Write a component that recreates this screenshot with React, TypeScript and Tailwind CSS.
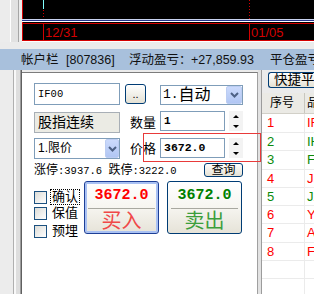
import React from 'react'

const mono = "font-['Liberation_Mono','Noto_Sans_CJK_SC',monospace]"

function Chart() {
  return (
    <div className="relative h-[41px] w-[292px] bg-black">
      <svg className="absolute left-0 top-0" width="292" height="41">
        <line x1="0.5" y1="0" x2="0.5" y2="41" stroke="#d40000" />
        <line x1="0" y1="19.5" x2="292" y2="19.5" stroke="#c8d2f0" />
        <line x1="0" y1="20.5" x2="292" y2="20.5" stroke="#24348c" />
        <line x1="0" y1="21.5" x2="292" y2="21.5" stroke="#ffffff" />
        <line x1="0" y1="23.5" x2="292" y2="23.5" stroke="#d40000" />
        <line x1="0" y1="40.5" x2="292" y2="40.5" stroke="#d40000" />
        <line x1="21.5" y1="0" x2="21.5" y2="9" stroke="#80ffff" />
        <line x1="21.5" y1="10" x2="21.5" y2="19" stroke="#d40000" strokeDasharray="1 2" />
        <line x1="21.5" y1="24" x2="21.5" y2="40" stroke="#d40000" />
        <line x1="227.5" y1="0" x2="227.5" y2="19" stroke="#d40000" strokeDasharray="1 2" />
        <line x1="227.5" y1="24" x2="227.5" y2="40" stroke="#d40000" />
      </svg>
      <span className="absolute left-[23px] top-[26px] text-[13px] leading-[14px] text-[#d40000] font-['Liberation_Sans',sans-serif]">12/31</span>
      <span className="absolute left-[229px] top-[26px] text-[13px] leading-[14px] text-[#d40000] font-['Liberation_Sans',sans-serif]">01/05</span>
    </div>
  )
}

function DropArrow({ className = '' }: { className?: string }) {
  return (
    <div className={`flex items-center justify-center rounded-[2px] border border-[#bccdf2] bg-linear-to-b from-[#cbdafc] to-[#b1c6f3] ${className}`}>
      <svg width="9" height="6" viewBox="0 0 9 6">
        <path d="M1 1 L4.5 4.5 L8 1" fill="none" stroke="#4d6185" strokeWidth="2" />
      </svg>
    </div>
  )
}

function Spinner({ className = '' }: { className?: string }) {
  return (
    <div className={`flex h-[20px] w-[14px] flex-col ${className}`}>
      <div className="flex h-[10px] items-center justify-center bg-[#f3f3f3]">
        <div className="h-0 w-0 border-x-[3px] border-b-[3px] border-x-transparent border-b-black" />
      </div>
      <div className="flex h-[10px] items-center justify-center bg-[#f3f3f3]">
        <div className="h-0 w-0 border-x-[3px] border-t-[3px] border-x-transparent border-t-black" />
      </div>
    </div>
  )
}

function Check({ label, focus = false, className = '' }: { label: string; focus?: boolean; className?: string }) {
  return (
    <div className={`flex items-center ${className}`}>
      <div className="h-[13px] w-[13px] shrink-0 border border-[#1c5180] bg-linear-to-br from-[#dcdcd7] to-white" />
      <span className={`ml-[3px] border px-[1px] text-[13px] leading-[14px] ${focus ? 'border-dotted border-black' : 'border-transparent'}`}>{label}</span>
    </div>
  )
}

function OrderPanel() {
  return (
    <div className="mt-[2px] w-[236px] shrink-0 border-t border-r border-t-[#7c7c7c] border-r-[#a0a0a0] bg-white pl-[12px] pt-[10px]">
      <div className="flex h-[22px] items-start">
        <div className={`h-[22px] w-[86px] border border-[#7f9db9] pl-[3px] text-[10.5px] leading-[20px] ${mono}`}>IF00</div>
        <div className="ml-[5px] mt-[1px] flex h-[20px] w-[21px] items-end justify-center rounded-[3px] border border-[#003c74] bg-linear-to-b from-white to-[#e4e1d4] pb-[3px] text-[11px] leading-[11px]">..</div>
        <div className="ml-[14px] mt-[2px] flex h-[20px] w-[83px] items-center border border-[#7f9db9] pl-[2px]">
          <span className={`text-[13px] leading-[18px] ${mono}`}>1.</span>
          <span className="text-[16px] leading-[18px]">自动</span>
          <DropArrow className="ml-auto h-[18px] w-[16px]" />
        </div>
      </div>

      <div className="mt-[6px] flex h-[22px] items-start">
        <div className="mt-[1px] h-[21px] w-[86px] border border-[#a8afb6] bg-[#ebebe4] pl-[3px] text-[14px] leading-[19px]">股指连续</div>
        <span className="ml-[10px] mt-[5px] text-[13px] leading-[14px]">数量</span>
        <div className={`ml-[4px] h-[20px] w-[65px] border border-[#7f9db9] pl-[3px] text-[11px] font-bold leading-[18px] ${mono}`}>1</div>
        <Spinner className="ml-[4px]" />
      </div>

      <div className="mt-[5px] flex h-[21px] items-start">
        <div className="flex h-[21px] w-[86px] items-center border border-[#7f9db9] pl-[3px]">
          <span className="text-[12px] leading-[19px]">1.限价</span>
          <DropArrow className="ml-auto h-[19px] w-[14px]" />
        </div>
        <span className="ml-[10px] mt-[4px] text-[13px] leading-[14px]">价格</span>
        <div className={`ml-[4px] h-[20px] w-[65px] border border-[#7f9db9] pl-[3px] text-[11.5px] font-bold leading-[18px] ${mono}`}>3672.0</div>
        <Spinner className="ml-[4px]" />
      </div>

      <div className="mt-[4px] flex h-[14px] items-start">
        <div className="mt-[1px] w-[170px] shrink-0 whitespace-nowrap text-[12px] leading-[13px]">
          涨停<span className={`text-[10.5px] ${mono}`}>:3937.6 </span>跌停<span className={`text-[10.5px] ${mono}`}>:3222.0</span>
        </div>
        <div className="flex h-[14px] w-[39px] items-center justify-center rounded-[3px] border border-[#003c74] bg-linear-to-b from-white to-[#e4e1d4] text-[12px] leading-[12px]">查询</div>
      </div>

      <div className="mt-[4px] flex">
        <div className="w-[50px] shrink-0 pt-[8px]">
          <Check label="确认" focus />
          <Check label="保值" />
          <Check label="预埋" className="mt-[2px]" />
        </div>
        <div className="flex h-[53px] w-[75px] flex-col rounded-[3px] border border-[#1d3f96] bg-linear-to-b from-white via-[#f6f5f0] to-[#e6e3d8] shadow-[inset_0_0_0_2px_#a9c1f3]">
          <div className={`flex h-[26px] items-center justify-center pt-[1px] text-[15px] font-bold leading-[15px] text-[#ff0000] ${mono}`}>3672.0</div>
          <div className="mx-[3px] h-[1px] bg-[#a8a8a0]" />
          <div className="flex h-[24px] items-center justify-center text-[20px] leading-[20px] text-[#f04848]">买入</div>
        </div>
        <div className="ml-[8px] flex h-[53px] w-[75px] flex-col rounded-[3px] border border-[#003c74] bg-linear-to-b from-white via-[#f6f5f0] to-[#e6e3d8]">
          <div className={`flex h-[26px] items-center justify-center pt-[1px] text-[15px] font-bold leading-[15px] text-[#008000] ${mono}`}>3672.0</div>
          <div className="mx-[3px] h-[1px] bg-[#a8a8a0]" />
          <div className="flex h-[24px] items-center justify-center text-[20px] leading-[20px] text-[#3c9e3c]">卖出</div>
        </div>
      </div>
    </div>
  )
}

const rows = [
  { n: '1', code: 'IF2501', c: 'text-[#ff0000]' },
  { n: '2', code: 'IH2501', c: 'text-[#0a8a0a]' },
  { n: '3', code: 'FG505', c: 'text-[#0a8a0a]' },
  { n: '4', code: 'JD2505', c: 'text-[#ff0000]' },
  { n: '5', code: 'J2505', c: 'text-[#0a8a0a]' },
  { n: '6', code: 'Y2505', c: 'text-[#ff0000]' },
  { n: '7', code: 'AG2506', c: 'text-[#ff0000]' },
  { n: '8', code: 'FU2505', c: 'text-[#ff0000]' },
]

function PositionList() {
  return (
    <div className="flex w-[52px] shrink-0 flex-col overflow-hidden">
      <div className="ml-[6px] mt-[2px] h-[16px] w-[60px] shrink-0 overflow-hidden whitespace-nowrap rounded-l-[3px] border border-r-0 border-[#003c74] bg-linear-to-b from-white to-[#e4e1d4] pl-[5px] text-[13.5px] leading-[14px]">快捷平仓</div>
      <div className="mt-[5px] flex h-[21px] shrink-0 border-b border-[#d2d0c8] bg-[#ebeae5] text-[12px] leading-[20px]">
        <div className="w-[43px] shrink-0 border-r border-[#c9c7bf] pl-[8px]">序号</div>
        <div className="whitespace-nowrap pl-[2px]">品种</div>
      </div>
      <div className="flex-1 bg-white">
        {rows.map((r, i) => (
          <div key={r.n} className={`flex border-b border-[#ebebeb] text-[13px] font-['Liberation_Sans',sans-serif] ${i === 0 ? 'h-[19px] leading-[18px]' : 'h-[18.25px] leading-[17px]'} ${r.c}`}>
            <div className="w-[43px] shrink-0 border-r border-[#ebebeb] pl-[5px]">{r.n}</div>
            <div className="whitespace-nowrap pl-[2px]">{r.code}</div>
          </div>
        ))}
        <div className="flex h-[18.25px] border-b border-[#ebebeb]">
          <div className="w-[43px] border-r border-[#ebebeb]" />
        </div>
        <div className="flex h-[18.25px]">
          <div className="w-[43px] border-r border-[#ebebeb]" />
        </div>
      </div>
    </div>
  )
}

export default function App() {
  return (
    <div className="relative h-[294px] w-[314px] overflow-hidden bg-[#ebebeb] text-black font-['Liberation_Sans','Noto_Sans_CJK_SC',sans-serif]">
      <div className="flex h-[42px]">
        <div className="flex w-[22px] shrink-0">
          <div className="w-[10px] bg-[#ececec]" />
          <div className="w-[1px] bg-white" />
          <div className="w-[7px] bg-[#e2e2e2]" />
          <div className="w-[1px] bg-[#a6a6a6]" />
          <div className="w-[3px] bg-[#ececec]" />
        </div>
        <div className="flex flex-col">
          <Chart />
          <div className="h-[1px] bg-white" />
        </div>
      </div>
      <div className="h-[7px]" />
      <div className="flex h-[21px] items-center whitespace-nowrap bg-[#a8c0dc] text-[12.5px] leading-[14px] text-[#111]">
        <span className="w-[66px] shrink-0 pl-[21px]">帐户栏</span>
        <span className="w-[63px] shrink-0">[807836]</span>
        <span className="w-[62px] shrink-0">浮动盈亏：</span>
        <span className="w-[79px] shrink-0">+27,859.93</span>
        <span className="shrink-0">平仓盈亏：</span>
      </div>
      <div className="flex h-[224px]">
        <div className="flex w-[22px] shrink-0">
          <div className="w-[13px] bg-[#ececec]" />
          <div className="w-[1px] bg-[#b0b0b0]" />
          <div className="w-[2px] bg-[#f8f8f8]" />
          <div className="w-[4px] bg-[#dedede]" />
          <div className="w-[1px] bg-[#9c9c9c]" />
          <div className="w-[1px] bg-[#606060]" />
        </div>
        <OrderPanel />
        <div className="w-[4px] shrink-0 border-r border-[#9c9c9c] bg-[#e2e2e2]" />
        <PositionList />
      </div>
      <div className="absolute left-[143px] top-[133px] h-[29px] w-[118px] border border-[#e83a3a]" />
    </div>
  )
}
